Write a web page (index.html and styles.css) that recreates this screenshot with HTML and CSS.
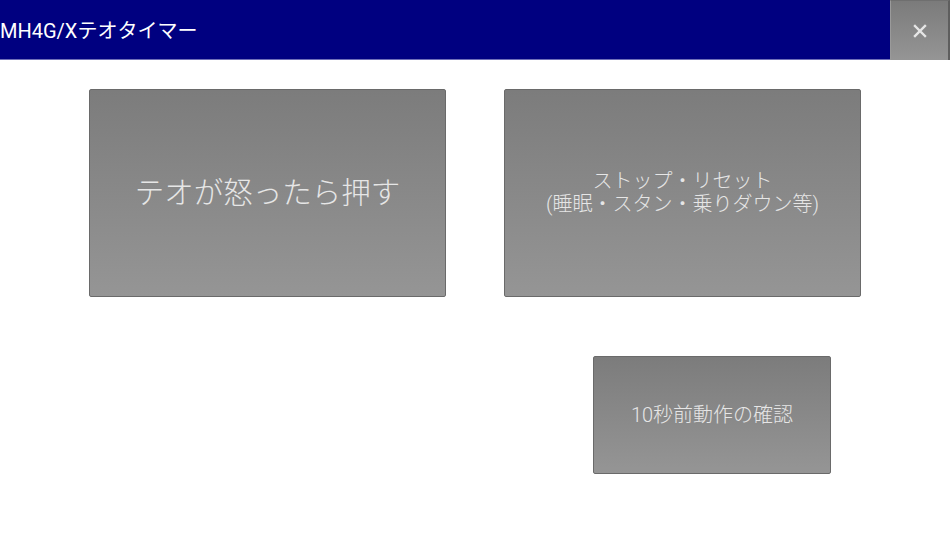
FILE: index.html
```html
<!DOCTYPE html>
<html lang="ja">
<head>
<meta charset="utf-8">
<title>MH4G/Xテオタイマー</title>
<link rel="stylesheet" href="styles.css">
</head>
<body>
<header class="titlebar">
  <div class="title">MH4G/Xテオタイマー</div>
  <button class="close" aria-label="閉じる">
    <svg width="14" height="14" viewBox="0 0 14 14"><path d="M2 2 L12 12 M12 2 L2 12" stroke="#e6e6e6" stroke-width="2.4" stroke-linecap="square"/></svg>
  </button>
</header>
<main class="board">
  <button class="btn btn-big">テオが怒ったら押す</button>
  <button class="btn btn-mid">ストップ・リセット<br>(睡眠・スタン・乗りダウン等)</button>
  <div class="spacer"></div>
  <div class="cell-small">
    <button class="btn btn-small">10秒前動作の確認</button>
  </div>
</main>
</body>
</html>
```

FILE: styles.css
```css
html, body {
  margin: 0;
  padding: 0;
  background: #ffffff;
  font-family: Roboto, "Noto Sans CJK JP", sans-serif;
}

.titlebar {
  display: flex;
  height: 60px;
  background: #000080;
  border-bottom: 1px solid #6f6fb8;
  box-sizing: border-box;
}

.title {
  flex: 1;
  display: flex;
  align-items: center;
  color: #ffffff;
  font-size: 20px;
  padding-bottom: 1px;
}

.close {
  width: 60px;
  height: 60px;
  margin: 0;
  padding: 0;
  border: none;
  border-left: 1px solid #9a9a9a;
  border-right: 2px solid #5e5e5e;
  border-top: 1px solid #6f6f6f;
  background: linear-gradient(#7b7b7b, #959595);
  display: flex;
  align-items: center;
  justify-content: center;
  box-sizing: border-box;
}

.board {
  display: grid;
  grid-template-columns: 357px 357px;
  column-gap: 58px;
  row-gap: 59px;
  padding: 29px 0 0 89px;
}

.btn {
  margin: 0;
  border: 1px solid #6a6a6a;
  border-radius: 2px;
  background: linear-gradient(#7c7c7c, #959595);
  color: #e6e6e6;
  font-family: Roboto, "Noto Sans CJK JP", sans-serif;
  box-sizing: border-box;
  text-align: center;
  padding: 0;
}

.btn-big {
  height: 208px;
  font-size: 29.5px;
  font-weight: 300;
  padding-bottom: 6px;
}

.btn-mid {
  height: 208px;
  font-size: 20px;
  font-weight: 300;
  line-height: 23px;
  padding-bottom: 0;
}

.cell-small {
  padding-left: 89px;
}

.btn-small {
  width: 238px;
  height: 118px;
  font-size: 20px;
  font-weight: 300;
  padding-bottom: 3px;
}
```
